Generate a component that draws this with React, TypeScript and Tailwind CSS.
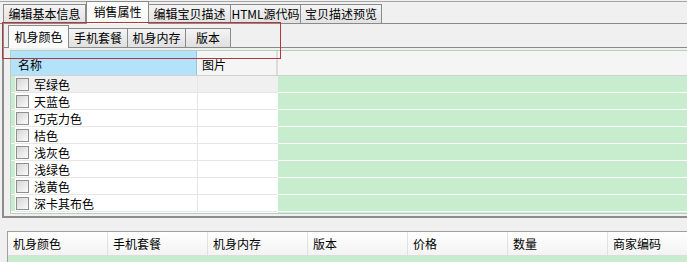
import React from 'react';

const topTabs = [
  { label: '编辑基本信息', w: 'w-[83px]' },
  { label: '销售属性', w: 'w-[63px]', active: true },
  { label: '编辑宝贝描述', w: 'w-[83px]' },
  { label: 'HTML源代码', w: 'w-[71px]' },
  { label: '宝贝描述预览', w: 'w-[82px]' },
];

const innerTabs = [
  { label: '机身颜色', w: 'w-[61px]', active: true },
  { label: '手机套餐', w: 'w-[60px]' },
  { label: '机身内存', w: 'w-[59px]' },
  { label: '版本', w: 'w-[46px]' },
];

const colors = ['军绿色', '天蓝色', '巧克力色', '桔色', '浅灰色', '浅绿色', '浅黄色', '深卡其布色'];

const skuCols = ['机身颜色', '手机套餐', '机身内存', '版本', '价格', '数量', '商家编码'];

const Checkbox: React.FC = () => (
  <span className="w-[13px] h-[13px] border border-[#8f8f8f] bg-gradient-to-br from-[#d6d6d6] to-[#fbfbfb] shrink-0" />
);

const App: React.FC = () => {
  return (
    <div
      className="relative w-[687px] h-[262px] overflow-hidden bg-[#f0f0f0] text-[12px] leading-none text-black whitespace-nowrap"
      style={{ fontFamily: '"Noto Sans CJK SC", "Noto Sans", sans-serif' }}
    >
      {/* top tab strip */}
      <div className="border-t border-[#a5a5a5] mt-[1px] h-[23px] flex items-end pl-[3px] border-b border-b-[#8a8a8a]">
        {topTabs.map((t) =>
          t.active ? (
            <div
              key={t.label}
              className={`${t.w} h-[23px] -mb-px bg-[#fafafa] border border-b-0 border-[#8a8a8a] flex items-center justify-center pb-[2px]`}
            >
              {t.label}
            </div>
          ) : (
            <div
              key={t.label}
              className={`${t.w} h-[19px] bg-gradient-to-b from-[#f4f4f4] to-[#e2e2e2] border border-b-0 border-[#8a8a8a] flex items-center justify-center -ml-px first:ml-0`}
            >
              {t.label}
            </div>
          )
        )}
      </div>

      {/* panel */}
      <div className="h-[194px] border-l-2 border-b-2 border-[#8d8d8d] ml-[2px]">
        {/* inner tab strip */}
        <div className="h-[24px] flex items-end pl-[4px] border-b border-[#8a8a8a]">
          {innerTabs.map((t) =>
            t.active ? (
              <div
                key={t.label}
                className={`${t.w} h-[23px] -mb-px bg-[#fafafa] border border-b-0 border-[#8a8a8a] flex items-center justify-center`}
              >
                {t.label}
              </div>
            ) : (
              <div
                key={t.label}
                className={`${t.w} h-[19px] bg-gradient-to-b from-[#f4f4f4] to-[#e0e0e0] border border-b-0 border-[#8a8a8a] flex items-center justify-center -ml-px`}
              >
                {t.label}
              </div>
            )
          )}
        </div>

        {/* color grid */}
        <div className="mt-[2px] ml-[6px] h-[164px] bg-white border-l border-t border-b border-[#b5cfbb]">
          <div className="grid grid-cols-[186px_81px_1fr] h-[25px] border-b border-[#d0d0d0] bg-[#f5f5f6]">
            <div className="bg-[#b3e3fa] border-r border-[#94c6de] pl-[7px] pt-[8px]">名称</div>
            <div className="border-r-2 border-[#dcdcdc] pl-[5px] pt-[8px]">图片</div>
            <div />
          </div>
          {colors.map((c, i) => (
            <div key={c} className="h-[17px] flex">
              <div className="w-[4px] bg-[#c8ecce] border-b border-white" />
              <div
                className={`w-[182px] flex items-center gap-[5px] pl-[1px] border-b border-[#e6e6e6] ${i === 0 ? 'bg-[#f0f0f0]' : 'bg-white'}`}
              >
                <Checkbox />
                <span className="pt-[2px]">{c}</span>
              </div>
              <div className={`w-[81px] border-l border-b border-[#e6e6e6] ${i === 0 ? 'bg-[#f0f0f0]' : 'bg-white'}`} />
              <div className="flex-1 bg-[#c8ecce] border-b border-white" />
            </div>
          ))}
          <div className="h-[1px] flex">
            <div className="w-[267px] bg-white" />
            <div className="flex-1 bg-[#c8ecce]" />
          </div>
        </div>
      </div>

      {/* sku grid */}
      <div className="mt-[13px] ml-[7px] border-l border-t border-[#a0a0a0]">
        <div className="h-[24px] flex bg-gradient-to-b from-white to-[#f3f3f3] border-b border-[#dcdcdc]">
          {skuCols.map((c) => (
            <div key={c} className="w-[100px] shrink-0 border-r border-[#e2e2e2] flex items-center pl-[5px] pt-[1px]">
              {c}
            </div>
          ))}
        </div>
        <div className="h-[10px] bg-[#c8ecce]" />
      </div>

      {/* annotation */}
      <div className="absolute left-[2px] top-[22px] w-[279px] h-[37px] border-[1.5px] border-[#b03a3a] bg-transparent pointer-events-none" />
    </div>
  );
};

export default App;
